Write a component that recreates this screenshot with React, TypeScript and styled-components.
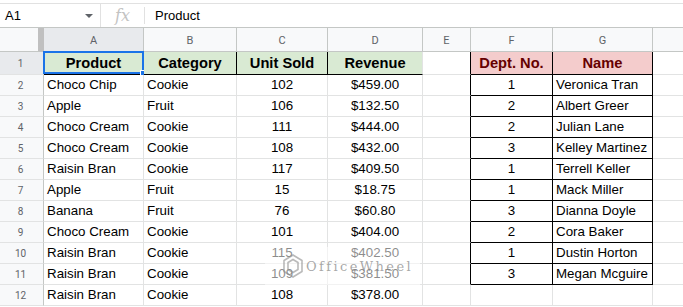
import styled, { createGlobalStyle } from 'styled-components'

const GlobalStyle = createGlobalStyle`
  html, body {
    margin: 0;
    padding: 0;
    background: #fff;
    overflow: hidden;
  }
  body {
    font-family: Arial, "Liberation Sans", sans-serif;
    color: #000;
  }
`

const GRID = '#e2e3e3'
const HEAD_LINE = '#c4c7c5'

const FormulaBar = styled.div`
  margin-top: 3px;
  height: 25px;
  box-sizing: border-box;
  border-top: 1px solid #e1e1e1;
  border-bottom: 1px solid ${HEAD_LINE};
  display: flex;
  align-items: center;
  font-size: 13px;
`

const NameBox = styled.div`
  width: 101px;
  height: 100%;
  box-sizing: border-box;
  border-right: 1px solid #e1e1e1;
  display: flex;
  align-items: center;
  justify-content: space-between;
  padding: 0 7px 0 5px;
`

const Caret = styled.span`
  width: 0;
  height: 0;
  border-left: 4px solid transparent;
  border-right: 4px solid transparent;
  border-top: 4px solid #5f6368;
`

const FxBox = styled.div`
  width: 43px;
  height: 100%;
  display: flex;
  align-items: center;
  justify-content: center;
  font-family: "DejaVu Serif", "Liberation Serif", serif;
  font-style: italic;
  font-size: 16px;
  color: #c3c3c3;
`

const Divider = styled.div`
  width: 1px;
  height: 17px;
  background: #e1e1e1;
`

const FormulaText = styled.div`
  padding-left: 10px;
`

const Sheet = styled.div`
  position: relative;
  display: grid;
  grid-template-columns: 44px 100px 93px 91px 95px 48px 82px 100px 100px;
  grid-template-rows: 24px 23px repeat(11, 21px);
`

const Corner = styled.div`
  box-sizing: border-box;
  background: #f8f9fa;
  border-right: 6px solid #c0c0c0;
  border-bottom: 1px solid ${HEAD_LINE};
`

const ColHead = styled.div<{ $active?: boolean }>`
  box-sizing: border-box;
  background: ${p => (p.$active ? '#e8eaed' : '#f8f9fa')};
  border-right: 1px solid ${HEAD_LINE};
  border-bottom: 1px solid ${HEAD_LINE};
  color: #5f6368;
  font-family: Roboto, Arial, sans-serif;
  font-size: 11px;
  display: flex;
  align-items: center;
  justify-content: center;
  padding-top: 1px;
`

const RowHead = styled.div<{ $active?: boolean }>`
  box-sizing: border-box;
  background: ${p => (p.$active ? '#e8eaed' : '#f8f9fa')};
  border-right: 1px solid ${HEAD_LINE};
  border-bottom: 1px solid ${GRID};
  color: #5f6368;
  font-family: Roboto, Arial, sans-serif;
  font-size: 10px;
  display: flex;
  align-items: center;
  justify-content: center;
  padding-right: 2px;
`

const Cell = styled.div<{
  $align?: 'left' | 'center'
  $head?: boolean
  $bg?: string
  $color?: string
  $right?: string
  $bottom?: string
}>`
  position: relative;
  box-sizing: border-box;
  background: ${p => p.$bg || '#fff'};
  border-right: 1px solid ${p => p.$right || GRID};
  border-bottom: 1px solid ${p => p.$bottom || GRID};
  padding: 0 3px;
  text-align: ${p => p.$align || 'left'};
  font-size: ${p => (p.$head ? '14.67px' : '13.33px')};
  font-weight: ${p => (p.$head ? 700 : 400)};
  line-height: ${p => (p.$head ? '22px' : '20px')};
  color: ${p => p.$color || '#000'};
  white-space: nowrap;
`

const Selection = styled.div`
  position: absolute;
  left: -1px;
  top: -1px;
  right: -1px;
  bottom: 0;
  border: 2px solid #1a73e8;
  pointer-events: none;
`

const Handle = styled.div`
  position: absolute;
  right: -5px;
  bottom: -5px;
  width: 5px;
  height: 5px;
  background: #1a73e8;
  border: 1px solid #fff;
`

const Watermark = styled.div`
  position: absolute;
  left: 265px;
  top: 219px;
  width: 155px;
  height: 38px;
  background: rgba(255, 255, 255, 0.55);
  display: flex;
  align-items: center;
  gap: 3px;
  padding-left: 18px;
  box-sizing: border-box;
`

const WatermarkText = styled.span`
  font-family: "DejaVu Serif", "Liberation Serif", serif;
  font-size: 13px;
  letter-spacing: 2.4px;
  color: rgba(130, 130, 130, 0.7);
`

const GREEN = '#d9ead3'
const PINK = '#f4cccc'

const products = [
  ['Choco Chip', 'Cookie', '102', '$459.00'],
  ['Apple', 'Fruit', '106', '$132.50'],
  ['Choco Cream', 'Cookie', '111', '$444.00'],
  ['Choco Cream', 'Cookie', '108', '$432.00'],
  ['Raisin Bran', 'Cookie', '117', '$409.50'],
  ['Apple', 'Fruit', '15', '$18.75'],
  ['Banana', 'Fruit', '76', '$60.80'],
  ['Choco Cream', 'Cookie', '101', '$404.00'],
  ['Raisin Bran', 'Cookie', '115', '$402.50'],
  ['Raisin Bran', 'Cookie', '109', '$381.50'],
  ['Raisin Bran', 'Cookie', '108', '$378.00'],
]

const staff = [
  ['1', 'Veronica Tran'],
  ['2', 'Albert Greer'],
  ['2', 'Julian Lane'],
  ['3', 'Kelley Martinez'],
  ['1', 'Terrell Keller'],
  ['1', 'Mack Miller'],
  ['3', 'Dianna Doyle'],
  ['2', 'Cora Baker'],
  ['1', 'Dustin Horton'],
  ['3', 'Megan Mcguire'],
]

const letters = ['A', 'B', 'C', 'D', 'E', 'F', 'G', '']

function HexLogo() {
  return (
    <svg width="20" height="24" viewBox="0 0 20 24">
      <g fill="none" stroke="rgba(140,140,140,0.6)" strokeWidth="1.6">
        <polygon points="10,1 19,6.5 19,17.5 10,23 1,17.5 1,6.5" />
        <polygon points="10,5.5 15,8.5 15,15.5 10,18.5 5,15.5 5,8.5" />
      </g>
    </svg>
  )
}

export default function App() {
  return (
    <>
      <GlobalStyle />
      <FormulaBar>
        <NameBox>
          <span>A1</span>
          <Caret />
        </NameBox>
        <FxBox>fx</FxBox>
        <Divider />
        <FormulaText>Product</FormulaText>
      </FormulaBar>

      <Sheet>
        <Corner />
        {letters.map((l, i) => (
          <ColHead key={i} $active={l === 'A'}>
            {l}
          </ColHead>
        ))}

        <RowHead $active>1</RowHead>
        <Cell $head $align="center" $bg={GREEN} $right="#000" $bottom="#000">
          Product
          <Selection>
            <Handle />
          </Selection>
        </Cell>
        <Cell $head $align="center" $bg={GREEN} $right="#000" $bottom="#000">Category</Cell>
        <Cell $head $align="center" $bg={GREEN} $right="#000" $bottom="#000">Unit Sold</Cell>
        <Cell $head $align="center" $bg={GREEN} $bottom="#000">Revenue</Cell>
        <Cell $right="#000" />
        <Cell $head $align="center" $bg={PINK} $color="#660000" $right="#000" $bottom="#000">Dept. No.</Cell>
        <Cell $head $align="center" $bg={PINK} $color="#660000" $right="#000" $bottom="#000">Name</Cell>
        <Cell />

        {products.map((p, i) => {
          const s = staff[i]
          return [
            <RowHead key={`r${i}`}>{i + 2}</RowHead>,
            <Cell key={`a${i}`}>{p[0]}</Cell>,
            <Cell key={`b${i}`}>{p[1]}</Cell>,
            <Cell key={`c${i}`} $align="center">{p[2]}</Cell>,
            <Cell key={`d${i}`} $align="center">{p[3]}</Cell>,
            <Cell key={`e${i}`} $right={s ? '#000' : undefined} />,
            <Cell key={`f${i}`} $align="center" $right={s ? '#000' : undefined} $bottom={s ? '#000' : undefined}>
              {s ? s[0] : ''}
            </Cell>,
            <Cell key={`g${i}`} $right={s ? '#000' : undefined} $bottom={s ? '#000' : undefined}>
              {s ? s[1] : ''}
            </Cell>,
            <Cell key={`h${i}`} />,
          ]
        })}

        <Watermark>
          <HexLogo />
          <WatermarkText>OfficeWheel</WatermarkText>
        </Watermark>
      </Sheet>
    </>
  )
}
